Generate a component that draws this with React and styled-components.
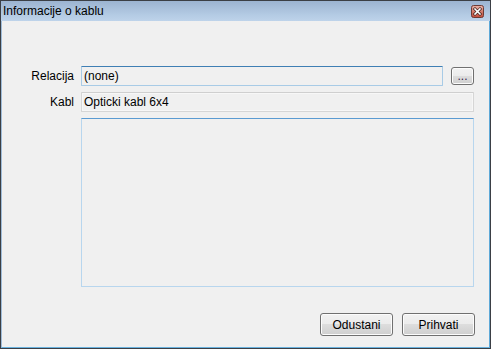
import React from "react";
import styled, { createGlobalStyle } from "styled-components";

const GlobalStyle = createGlobalStyle`
  html, body {
    margin: 0;
    padding: 0;
    background: #f0f0f0;
  }
  body {
    font-family: "Liberation Sans", Arial, sans-serif;
    font-size: 12px;
    color: #000;
  }
`;

const Window = styled.div`
  width: 491px;
  height: 349px;
  box-sizing: border-box;
  border: 1px solid #3b3f45;
  display: flex;
  flex-direction: column;
  background: #f0f0f0;
`;

const TitleBar = styled.div`
  height: 20px;
  flex: 0 0 20px;
  display: flex;
  align-items: center;
  justify-content: space-between;
  padding: 0 6px 0 2px;
  background: linear-gradient(#9cb4d1, #b4cbe4 70%, #bed3ea);
`;

const Title = styled.span`
  font-size: 12px;
  color: #000;
`;

const CloseBox = styled.div`
  width: 13px;
  height: 13px;
  display: flex;
`;

const Body = styled.div`
  flex: 1;
  border-left: 1px solid #9fbcd9;
  border-right: 1px solid #5ea9d8;
  border-bottom: 1px solid #6ab2de;
  padding: 45px 0 0 0;
  display: flex;
  flex-direction: column;
`;

const Form = styled.div`
  display: grid;
  grid-template-columns: 72px 393px;
  column-gap: 7px;
  row-gap: 6px;
`;

const Label = styled.div`
  text-align: right;
  align-self: center;
  color: #000;
`;

const FieldRow = styled.div`
  display: flex;
  gap: 8px;
  align-items: flex-start;
`;

const TextBox = styled.div`
  box-sizing: border-box;
  height: 20px;
  flex: 1;
  display: flex;
  align-items: center;
  padding-left: 2px;
  background: #f0f0f0;
  border: 1px solid ${({ $active }) => ($active ? "#a8cbe6" : "#d6d6d6")};
  border-top-color: ${({ $active }) => ($active ? "#3f7fb4" : "#cfcfcf")};
  box-shadow: ${({ $active }) => ($active ? "none" : "inset 0 0 0 1px #f7f7f7")};
  border-radius: 1px;
`;

const TextArea = styled.div`
  grid-column: 2;
  box-sizing: border-box;
  height: 169px;
  background: #f0f0f0;
  border: 1px solid #b8d6ee;
  border-top-color: #5b9bd2;
`;

const SmallButton = styled.button`
  box-sizing: border-box;
  width: 23px;
  height: 18px;
  margin-top: 1px;
  padding: 0 0 2px;
  border: 1px solid #707070;
  border-radius: 3px;
  background: linear-gradient(#f2f2f2, #ebebeb 50%, #dddddd 50%, #cfcfcf);
  box-shadow: inset 0 0 0 1px #fcfcfc;
  font-family: inherit;
  font-size: 12px;
  line-height: 12px;
  color: #3a1a4a;
  display: flex;
  align-items: flex-end;
  justify-content: center;
`;

const Footer = styled.div`
  display: flex;
  justify-content: flex-end;
  gap: 9px;
  margin-top: 26px;
  padding-right: 14px;
`;

const Button = styled.button`
  box-sizing: border-box;
  width: 73px;
  height: 23px;
  padding: 0;
  border: 1px solid #707070;
  border-radius: 3px;
  background: linear-gradient(#f2f2f2, #ebebeb 50%, #dddddd 50%, #cfcfcf);
  box-shadow: inset 0 0 0 1px #fcfcfc;
  font-family: inherit;
  font-size: 12px;
  color: #000;
`;

const CloseIcon = () => (
  <svg width="13" height="13" viewBox="0 0 13 13">
    <defs>
      <linearGradient id="cg" x1="0" y1="0" x2="0" y2="1">
        <stop offset="0" stopColor="#e9b3a8" />
        <stop offset="0.5" stopColor="#d27b6c" />
        <stop offset="1" stopColor="#c24a3a" />
      </linearGradient>
    </defs>
    <rect x="0.5" y="0.5" width="12" height="12" rx="2" fill="url(#cg)" stroke="#6e3b34" />
    <path d="M4 4 L9 9 M9 4 L4 9" stroke="#3b1d18" strokeWidth="3" strokeLinecap="square" />
    <path d="M4 4 L9 9 M9 4 L4 9" stroke="#ffffff" strokeWidth="1.6" strokeLinecap="square" />
  </svg>
);

export default function App() {
  return (
    <>
      <GlobalStyle />
      <Window>
        <TitleBar>
          <Title>Informacije o kablu</Title>
          <CloseBox>
            <CloseIcon />
          </CloseBox>
        </TitleBar>
        <Body>
          <Form>
            <Label>Relacija</Label>
            <FieldRow>
              <TextBox $active>(none)</TextBox>
              <SmallButton>...</SmallButton>
            </FieldRow>
            <Label>Kabl</Label>
            <FieldRow>
              <TextBox>Opticki kabl 6x4</TextBox>
            </FieldRow>
            <TextArea />
          </Form>
          <Footer>
            <Button>Odustani</Button>
            <Button>Prihvati</Button>
          </Footer>
        </Body>
      </Window>
    </>
  );
}
